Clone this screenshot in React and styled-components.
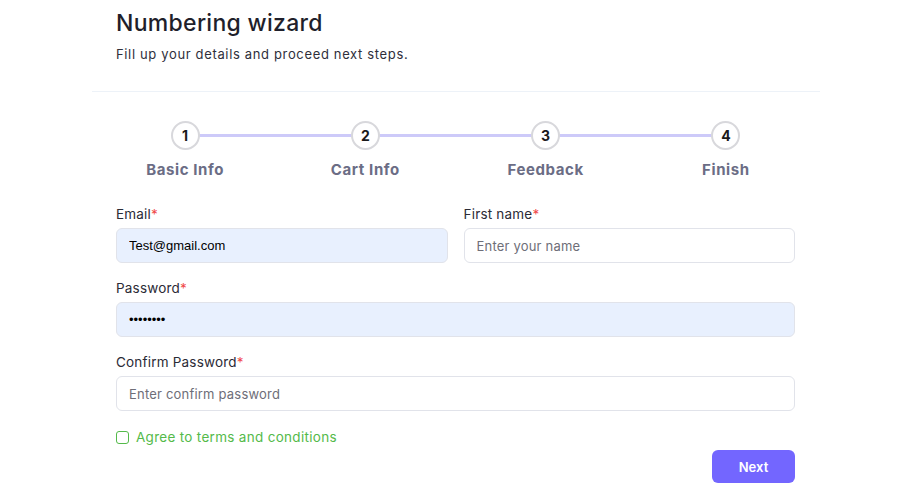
import styled, { createGlobalStyle } from "styled-components";

const GlobalStyle = createGlobalStyle`
  * { box-sizing: border-box; }
  body {
    margin: 0;
    background: #fff;
    font-family: Inter, "Noto Sans", sans-serif;
    color: #2b2b2b;
  }
`;

const steps = ["Basic Info", "Cart Info", "Feedback", "Finish"];

function App() {
  return (
    <>
      <GlobalStyle />
      <Card>
        <Header>
          <Title>Numbering wizard</Title>
          <Subtitle>Fill up your details and proceed next steps.</Subtitle>
        </Header>
        <Body>
          <Stepper>
            {steps.map((s, i) => (
              <Step key={s} $first={i === 0} $last={i === steps.length - 1}>
                <Circle>{i + 1}</Circle>
                <StepLabel>{s}</StepLabel>
              </Step>
            ))}
          </Stepper>
          <Form>
            <Field>
              <Label>
                Email<Req>*</Req>
              </Label>
              <Input $filled $plain defaultValue="Test@gmail.com" />
            </Field>
            <Field>
              <Label>
                First name<Req>*</Req>
              </Label>
              <Input placeholder="Enter your name" />
            </Field>
            <Field $wide>
              <Label>
                Password<Req>*</Req>
              </Label>
              <Input $filled $plain type="password" defaultValue="password" />
            </Field>
            <Field $wide>
              <Label>
                Confirm Password<Req>*</Req>
              </Label>
              <Input placeholder="Enter confirm password" />
            </Field>
          </Form>
          <Check>
            <Box type="checkbox" />
            Agree to terms and conditions
          </Check>
          <Actions>
            <NextButton>Next</NextButton>
          </Actions>
        </Body>
      </Card>
    </>
  );
}
export default App;

const Card = styled.div`
  width: 728px;
  margin-left: 92px;
`;

const Header = styled.div`
  padding: 8px 24px 27px;
  border-bottom: 1px solid #edf2f8;
`;

const Title = styled.h2`
  margin: 0;
  font-size: 23px;
  font-weight: 500;
  letter-spacing: 0.3px;
  line-height: 30px;
  color: #1f1f2b;
`;

const Subtitle = styled.p`
  margin: 6px 0 0;
  font-size: 13px;
  letter-spacing: 0.65px;
  line-height: 20px;
  color: #2f2f3b;
`;

const Body = styled.div`
  padding: 29px 25px 0 24px;
`;

const Stepper = styled.div`
  display: grid;
  grid-template-columns: repeat(4, 1fr);
  margin: 0 -21px;
`;

const Step = styled.div`
  position: relative;
  display: flex;
  flex-direction: column;
  align-items: center;
  &::before,
  &::after {
    content: "";
    position: absolute;
    top: 13px;
    height: 3px;
    background: #cdcaf9;
  }
  &::before {
    left: 0;
    right: 50%;
    display: ${(p) => (p.$first ? "none" : "block")};
  }
  &::after {
    left: 50%;
    right: 0;
    display: ${(p) => (p.$last ? "none" : "block")};
  }
`;

const Circle = styled.div`
  position: relative;
  z-index: 1;
  width: 29px;
  height: 29px;
  border-radius: 50%;
  border: 2px solid #d8d8dc;
  background: #fff;
  display: flex;
  align-items: center;
  justify-content: center;
  font-size: 14px;
  font-weight: 700;
  color: #1a1a1a;
`;

const StepLabel = styled.div`
  margin-top: 10px;
  font-size: 15px;
  font-weight: 700;
  letter-spacing: 0.6px;
  color: #6b6d85;
`;

const Form = styled.div`
  margin-top: 26px;
  display: grid;
  grid-template-columns: 1fr 1fr;
  column-gap: 16px;
  row-gap: 16px;
`;

const Field = styled.div`
  grid-column: ${(p) => (p.$wide ? "1 / -1" : "auto")};
  display: flex;
  flex-direction: column;
  gap: 5px;
`;

const Label = styled.label`
  font-size: 13.5px;
  line-height: 18px;
  letter-spacing: 0.2px;
  color: #2b2b36;
`;

const Req = styled.span`
  color: #f04a4a;
`;

const Input = styled.input`
  height: 35px;
  padding: 0 12px;
  border: 1px solid #e1e3ea;
  border-radius: 6px;
  background: ${(p) => (p.$filled ? "#e8f0fe" : "#fff")};
  font-family: ${(p) => (p.$plain ? '"Liberation Sans", Arial, sans-serif' : "inherit")};
  font-size: 13px;
  letter-spacing: ${(p) => (p.$plain ? "0" : "0.2px")};
  color: #000;
  outline: none;
  &::placeholder {
    color: #6e6e78;
  }
`;

const Check = styled.label`
  margin-top: 18px;
  display: flex;
  align-items: center;
  gap: 7px;
  font-size: 13.5px;
  letter-spacing: 0.3px;
  color: #54ba4a;
`;

const Box = styled.input`
  appearance: none;
  margin: 0;
  width: 13px;
  height: 13px;
  border: 1px solid #54ba4a;
  border-radius: 3px;
`;

const Actions = styled.div`
  display: flex;
  justify-content: flex-end;
  margin-top: 5px;
`;

const NextButton = styled.button`
  width: 83px;
  height: 33px;
  border: none;
  border-radius: 6px;
  background: #7366ff;
  color: #fff;
  font-family: inherit;
  font-size: 13px;
  font-weight: 600;
`;
